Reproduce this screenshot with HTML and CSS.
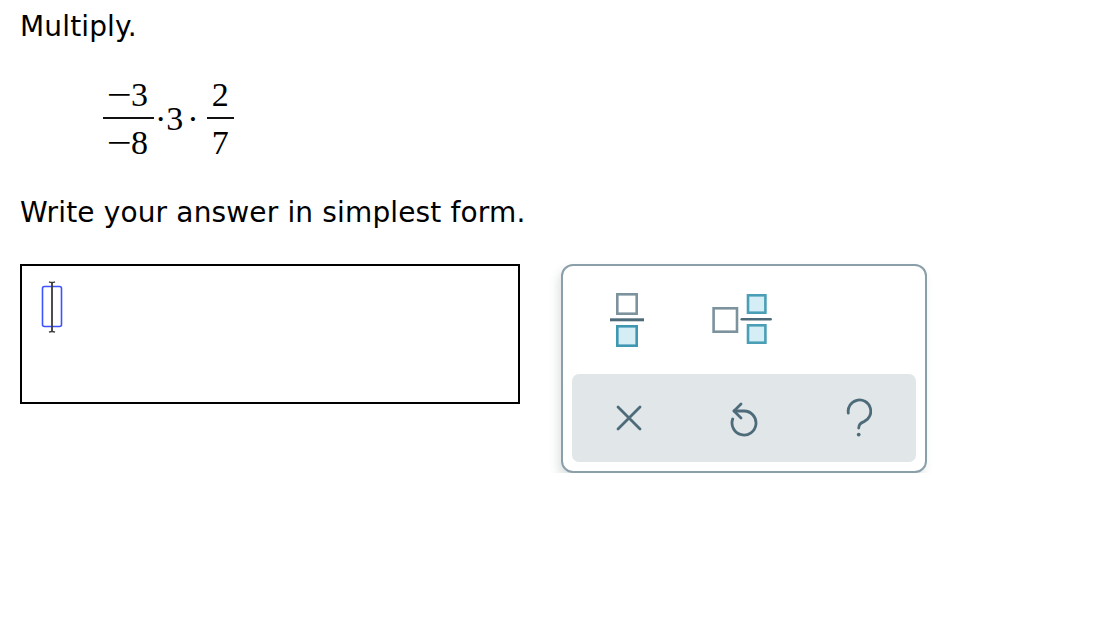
FILE: index.html
```html
<!DOCTYPE html>
<html lang="en">
<head>
<meta charset="utf-8">
<title>Multiply</title>
<link rel="stylesheet" href="styles.css">
</head>
<body>
<main class="page">
  <p class="prompt title">Multiply.</p>
  <div class="math">
    <span class="frac frac-wide">
      <span class="num"><span class="minus">−</span>3</span>
      <span class="bar"></span>
      <span class="den"><span class="minus">−</span>8</span>
    </span>
    <span class="dot dot-a">·</span><span class="mid">3</span><span class="dot dot-b">·</span>
    <span class="frac frac-narrow">
      <span class="num">2</span>
      <span class="bar"></span>
      <span class="den">7</span>
    </span>
  </div>
  <p class="prompt instruct">Write your answer in simplest form.</p>
  <div class="answer-row">
    <div class="answer-box">
      <svg class="caret" width="22" height="52" viewBox="0 0 22 52">
        <rect x="1.5" y="5.5" width="19" height="40" rx="2" fill="none" stroke="#3c54ff" stroke-width="1.6"/>
        <line x1="11" y1="1.5" x2="11" y2="50.5" stroke="#3a3a3a" stroke-width="1.8"/>
        <path d="M8 0.8 Q11 2.2 14 0.8 M8 51.2 Q11 49.8 14 51.2" fill="none" stroke="#3a3a3a" stroke-width="1.3"/>
      </svg>
    </div>
    <div class="keypad">
      <div class="key-row">
        <button class="key key-top" aria-label="fraction">
          <svg width="34" height="54" viewBox="0 0 34 54">
            <rect x="7.3" y="1.3" width="19.4" height="19.4" fill="#fff" stroke="#7c939d" stroke-width="2.6"/>
            <rect x="0" y="25.3" width="34" height="3" fill="#4e6b79"/>
            <rect x="7.3" y="33.3" width="19.4" height="19.4" fill="#d5edf4" stroke="#3f97b2" stroke-width="2.6"/>
          </svg>
        </button>
        <button class="key key-top" aria-label="mixed number">
          <svg width="60" height="52" viewBox="0 0 60 52">
            <rect x="1.6" y="14.3" width="23.4" height="23.4" fill="#fff" stroke="#7c939d" stroke-width="2.6"/>
            <rect x="36" y="1.3" width="17.4" height="17.4" fill="#d5edf4" stroke="#4a9fb7" stroke-width="2.6"/>
            <line x1="29.7" y1="25.3" x2="58.7" y2="25.3" stroke="#4e6b79" stroke-width="2.4" stroke-linecap="round"/>
            <rect x="36" y="31.3" width="17.4" height="17.4" fill="#d5edf4" stroke="#4a9fb7" stroke-width="2.6"/>
          </svg>
        </button>
        <span class="key-empty"></span>
      </div>
      <div class="key-panel">
        <button class="key" aria-label="clear">
          <svg width="26" height="26" viewBox="0 0 26 26">
            <path d="M2 2 L24 24 M24 2 L2 24" fill="none" stroke="#4e6b79" stroke-width="2.8" stroke-linecap="round"/>
          </svg>
        </button>
        <button class="key" aria-label="undo">
          <svg width="30" height="38" viewBox="0 0 30 38">
            <path d="M5 12 H15 A12 12 0 1 1 3.7 20" fill="none" stroke="#4e6b79" stroke-width="2.8" stroke-linecap="round"/>
            <path d="M12 5 L5 12 L12 19" fill="none" stroke="#4e6b79" stroke-width="2.8" stroke-linecap="round" stroke-linejoin="round"/>
          </svg>
        </button>
        <button class="key" aria-label="help">
          <svg width="26" height="40" viewBox="0 0 26 40">
            <path d="M2.3 15 A11.3 11.3 0 1 1 18 23.6 Q12.7 25.6 12.7 30" fill="none" stroke="#4e6b79" stroke-width="2.8" stroke-linecap="round"/>
            <circle cx="12.7" cy="36.6" r="1.9" fill="#4e6b79"/>
          </svg>
        </button>
      </div>
    </div>
  </div>
</main>
</body>
</html>
```
FILE: styles.css
```css
* { box-sizing: border-box; }
html, body { margin: 0; padding: 0; background: #fff; }
body {
  font-family: "DejaVu Sans", Verdana, sans-serif;
  color: #000;
}
.page {
  padding: 10px 0 0 20px;
}
.prompt {
  margin: 0;
  font-size: 28px;
  line-height: 33px;
  letter-spacing: 0.15px;
}
.math {
  display: flex;
  align-items: center;
  margin: 38px 0 0 83px;
  font-family: "Liberation Serif", "Times New Roman", serif;
  font-size: 34px;
  line-height: 28px;
}
.frac {
  display: inline-flex;
  flex-direction: column;
  align-items: center;
}
.frac-wide .num, .frac-wide .den { padding-left: 5px; padding-right: 6px; }
.frac-narrow .num, .frac-narrow .den { padding-left: 5px; padding-right: 5px; }
.num { display: block; padding-bottom: 8px; }
.den { display: block; padding-top: 10px; }
.bar {
  display: block;
  align-self: stretch;
  height: 2px;
  background: #111;
}
.minus {
  display: inline-block;
  width: 22px;
  margin-right: 1px;
  transform: scaleX(1.3);
  text-align: center;
}
.dot-a { margin-left: 1px; }
.dot-b { margin: 0 8px 0 4px; }
.instruct {
  margin-top: 39px;
}
.answer-row {
  display: flex;
  align-items: flex-start;
  gap: 41px;
  margin-top: 35px;
}
.answer-box {
  width: 500px;
  height: 140px;
  border: 2px solid #000;
  padding: 15px 0 0 19px;
}
.caret { display: block; }
.keypad {
  width: 366px;
  height: 209px;
  border: 2px solid #8a9fa9;
  border-radius: 12px;
  padding: 9px;
  display: flex;
  flex-direction: column;
  gap: 9px;
  background: #fff;
  box-shadow: -3px 6px 10px rgba(60, 80, 90, 0.16);
}
.key-row {
  height: 90px;
  display: grid;
  grid-template-columns: repeat(3, 1fr);
  align-items: center;
  justify-items: center;
}
.key-panel {
  height: 88px;
  background: #e1e6e9;
  border-radius: 7px;
  display: grid;
  grid-template-columns: repeat(3, 1fr);
  align-items: center;
  justify-items: center;
}
.key {
  border: 0;
  background: transparent;
  padding: 0;
  margin: 0;
  display: flex;
  align-items: center;
  justify-content: center;
}
.key svg { display: block; }
.key-top { margin-right: 4px; }
```
